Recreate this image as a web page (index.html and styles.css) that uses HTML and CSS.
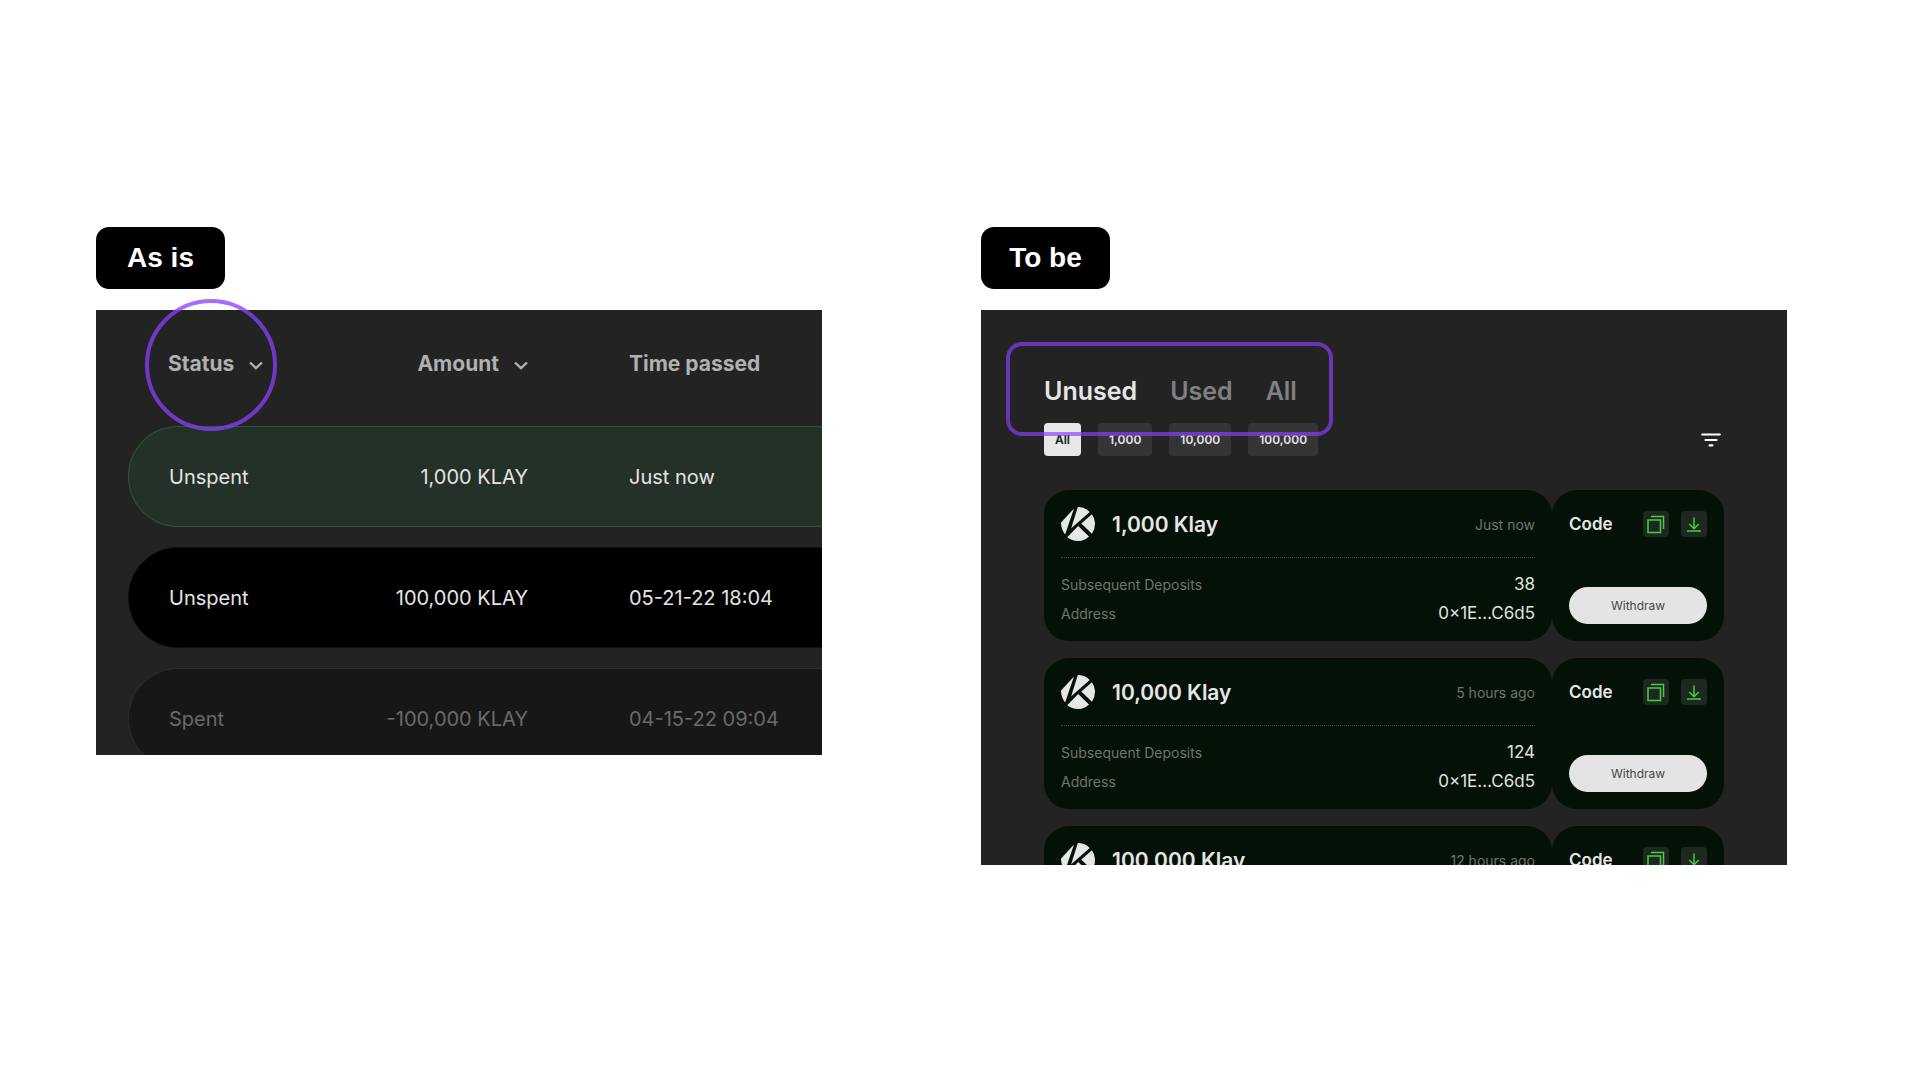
FILE: index.html
```html
<!DOCTYPE html>
<html lang="en">
  <head>
    <meta charset="utf-8">
    <title>As is / To be</title>
    <link rel="stylesheet" href="styles.css">
  </head>
  <body>
    <!-- Shared icons -->
    <svg class="sprite" aria-hidden="true">
      <symbol id="icon-chevron" viewBox="0 0 14 9">
        <path d="M1 1.5 7 7.2 13 1.5" fill="none" stroke="currentColor" stroke-width="2.4"/>
      </symbol>
      <symbol id="icon-filter" viewBox="0 0 20 14">
        <path d="M1.2 1.5H18.8M4.5 7H15.5M8.6 12.3H11.4" fill="none" stroke="currentColor" stroke-width="2.2" stroke-linecap="round"/>
      </symbol>
      <symbol id="icon-klay" viewBox="0 0 34 34">
        <path d="M13 1.4 0.1 15.6Q-.3 21.6 4.1 27.6Z"/>
        <path d="M16.8 0Q23.6-.2 28.7 4.9L10.2 21.3Z"/>
        <path d="M30.9 7.2Q34.2 11.5 34 17.2 33.9 22.6 30.9 26.8L20.3 16.6Z"/>
        <path d="M17.2 19 28 29.5Q23.2 34.1 17 34 10.8 34 6.2 30.3Z"/>
      </symbol>
      <symbol id="icon-copy" viewBox="0 0 26 26">
        <path d="M5 9H17.5V21.5H5ZM8 5.5H20.5V18" fill="none" stroke="currentColor" stroke-width="1.5"/>
      </symbol>
      <symbol id="icon-download" viewBox="0 0 26 26">
        <path d="M13 6.5V17.5M8.3 13 13 17.7 17.7 13M6 20H20" fill="none" stroke="currentColor" stroke-width="1.5"/>
      </symbol>
    </svg>
    <main class="compare">
      <section class="side">
        <h2 class="tag">As is</h2>
        <div class="shot">
          <div class="panel panel-before">
            <table class="history">
              <colgroup>
                <col class="col-status">
                <col class="col-amount">
                <col>
              </colgroup>
              <thead>
                <tr>
                  <th class="status"><button class="sort">Status <svg class="chevron"><use href="#icon-chevron"/></svg></button></th>
                  <th class="amount"><button class="sort">Amount <svg class="chevron"><use href="#icon-chevron"/></svg></button></th>
                  <th class="time">Time passed</th>
                </tr>
              </thead>
              <tbody>
                <tr class="row-new">
                  <td class="status">Unspent</td>
                  <td class="amount">1,000 KLAY</td>
                  <td class="time">Just now</td>
                </tr>
                <tr class="row-unspent">
                  <td class="status">Unspent</td>
                  <td class="amount">100,000 KLAY</td>
                  <td class="time">05-21-22 18:04</td>
                </tr>
                <tr class="row-spent">
                  <td class="status">Spent</td>
                  <td class="amount">-100,000 KLAY</td>
                  <td class="time">04-15-22 09:04</td>
                </tr>
              </tbody>
            </table>
          </div>
          <div class="mark mark-circle"></div>
        </div>
      </section>

      <section class="side">
        <h2 class="tag">To be</h2>
        <div class="shot">
          <div class="panel panel-after">
            <nav class="tabs">
              <button class="tab active">Unused</button>
              <button class="tab">Used</button>
              <button class="tab">All</button>
            </nav>
            <div class="filters">
              <button class="chip active">All</button>
              <button class="chip">1,000</button>
              <button class="chip">10,000</button>
              <button class="chip">100,000</button>
              <button class="filter-btn" aria-label="Filter"><svg class="filter-icon"><use href="#icon-filter"/></svg></button>
            </div>
            <div class="notes">
              <article class="note">
                <div class="card note-info">
                  <div class="note-head">
                    <svg class="logo"><use href="#icon-klay"/></svg>
                    <h3 class="note-title">1,000 Klay</h3>
                    <span class="ago">Just now</span>
                  </div>
                  <dl class="details">
                    <div class="detail"><dt>Subsequent Deposits</dt><dd>38</dd></div>
                    <div class="detail"><dt>Address</dt><dd>0×1E...C6d5</dd></div>
                  </dl>
                </div>
                <div class="card note-code">
                  <div class="code-head">
                    <h4 class="code-title">Code</h4>
                    <button class="icon-btn" aria-label="Copy"><svg class="icon"><use href="#icon-copy"/></svg></button>
                    <button class="icon-btn" aria-label="Download"><svg class="icon"><use href="#icon-download"/></svg></button>
                  </div>
                  <button class="withdraw">Withdraw</button>
                </div>
              </article>
              <article class="note">
                <div class="card note-info">
                  <div class="note-head">
                    <svg class="logo"><use href="#icon-klay"/></svg>
                    <h3 class="note-title">10,000 Klay</h3>
                    <span class="ago">5 hours ago</span>
                  </div>
                  <dl class="details">
                    <div class="detail"><dt>Subsequent Deposits</dt><dd>124</dd></div>
                    <div class="detail"><dt>Address</dt><dd>0×1E...C6d5</dd></div>
                  </dl>
                </div>
                <div class="card note-code">
                  <div class="code-head">
                    <h4 class="code-title">Code</h4>
                    <button class="icon-btn" aria-label="Copy"><svg class="icon"><use href="#icon-copy"/></svg></button>
                    <button class="icon-btn" aria-label="Download"><svg class="icon"><use href="#icon-download"/></svg></button>
                  </div>
                  <button class="withdraw">Withdraw</button>
                </div>
              </article>
              <article class="note">
                <div class="card note-info">
                  <div class="note-head">
                    <svg class="logo"><use href="#icon-klay"/></svg>
                    <h3 class="note-title">100,000 Klay</h3>
                    <span class="ago">12 hours ago</span>
                  </div>
                </div>
                <div class="card note-code">
                  <div class="code-head">
                    <h4 class="code-title">Code</h4>
                    <button class="icon-btn" aria-label="Copy"><svg class="icon"><use href="#icon-copy"/></svg></button>
                    <button class="icon-btn" aria-label="Download"><svg class="icon"><use href="#icon-download"/></svg></button>
                  </div>
                </div>
              </article>
            </div>
          </div>
          <div class="mark mark-box"></div>
        </div>
      </section>
    </main>
  </body>
</html>
```

FILE: styles.css
```css
* {
  box-sizing: border-box;
}
body {
  margin: 0;
  background: #fff;
  font-family: Inter, "Liberation Sans", sans-serif;
}
h2, h3, h4, dl, dd {
  margin: 0;
}
button {
  padding: 0;
  border: 0;
  background: none;
  color: inherit;
  font: inherit;
  cursor: pointer;
}
svg {
  display: block;
}
.sprite {
  position: absolute;
  width: 0;
  height: 0;
}
.compare {
  display: grid;
  grid-template-columns: 726fr 806fr;
  column-gap: 159px;
  align-items: start;
  padding: 227px 133px 0 96px;
}
.tag {
  width: 129px;
  margin-bottom: 21px;
  border-radius: 13px;
  background: #000;
  color: #fff;
  font-family: "Liberation Sans", Arial, sans-serif;
  font-size: 28px;
  font-weight: 700;
  line-height: 62px;
  text-align: center;
}
.shot {
  position: relative;
}
.panel {
  overflow: hidden;
  background: #232323;
}

/* Old history table */
.panel-before {
  aspect-ratio: 726 / 445;
  padding-left: 32px;
}
.history {
  width: 100%;
  table-layout: fixed;
  border-collapse: separate;
  border-spacing: 0 20px;
  color: #e4e4e4;
  font-size: 20px;
}
.col-status,
.col-amount {
  width: 200px;
}
.history th {
  height: 76px;
  padding: 0 0 10px;
  color: #b0b0b0;
  font-size: 21px;
  font-weight: 700;
  text-align: left;
}
.history td {
  height: 101px;
  padding: 0;
  border: 1px solid transparent;
  border-width: 1px 0;
}
.history .status {
  padding-left: 40px;
}
.history .amount {
  text-align: right;
}
.history .time {
  padding-left: 101px;
}
.history td.status {
  border-left-width: 1px;
  border-radius: 50px 0 0 50px;
}
.sort {
  display: inline-flex;
  align-items: center;
  gap: 15px;
}
.chevron {
  width: 14px;
  height: 9px;
  margin-top: 4px;
}
.row-new td {
  border-color: #2c592f;
  background: #243128;
}
.row-unspent td {
  border-color: #111;
  background: #000;
}
.row-spent td {
  border-color: #2d2d2d;
  background: #171717;
  color: #6a6a6a;
}

/* New note list */
.panel-after {
  aspect-ratio: 806 / 555;
  padding: 66px 63px 0;
}
.tabs {
  display: flex;
  gap: 33px;
  color: #808080;
  font-size: 25px;
  font-weight: 600;
  line-height: 30px;
}
.tab.active {
  color: #e6e6e6;
}
.filters {
  display: flex;
  align-items: center;
  gap: 17px;
  margin: 17px 0 34px;
}
.chip {
  height: 33px;
  padding: 0 11px;
  border-radius: 4px;
  background: #353535;
  color: #e4e4e4;
  font-size: 12px;
  font-weight: 600;
}
.chip.active {
  background: #e6e8e7;
  color: #0b2310;
}
.filter-btn {
  margin-left: auto;
  padding: 0 3px;
  color: #fff;
}
.filter-icon {
  width: 20px;
  height: 14px;
}
.notes {
  display: flex;
  flex-direction: column;
  gap: 17px;
}
.note {
  display: flex;
}
.card {
  padding: 17px;
  border-radius: 25px;
  background: #041106;
}
.note-info {
  flex: 1;
  padding-bottom: 13px;
}
.note-code {
  display: flex;
  flex-direction: column;
  justify-content: space-between;
  width: 172px;
}
.note-head,
.code-head {
  display: flex;
  align-items: center;
  height: 34px;
}
.logo {
  width: 34px;
  height: 34px;
  margin-right: 17px;
  fill: #e6e8e7;
}
.note-title {
  color: #e6e6e6;
  font-size: 21px;
  font-weight: 600;
}
.ago {
  margin-left: auto;
  color: #6e766f;
  font-size: 14px;
}
.details {
  margin-top: 16px;
  padding-top: 12px;
  border-top: 1px dotted #39443b;
}
.detail {
  display: flex;
  justify-content: space-between;
  line-height: 29px;
}
.detail dt {
  color: #6e766f;
  font-size: 14px;
}
.detail dd {
  color: #e0e2e0;
  font-size: 17px;
}
.code-head {
  gap: 12px;
}
.code-title {
  margin-right: auto;
  color: #e6e6e6;
  font-size: 17px;
  font-weight: 600;
}
.icon-btn {
  border-radius: 4px;
  background: #1d2920;
  color: #4fc94a;
}
.icon {
  width: 26px;
  height: 26px;
}
.withdraw {
  height: 37px;
  border-radius: 19px;
  background: #e4e4e4;
  color: #444;
  font-size: 12px;
}

/* Highlights drawn over the screens */
.mark {
  position: absolute;
  border: 4px solid #8a3ffc;
  pointer-events: none;
}
.mark-circle {
  top: -11px;
  left: 49px;
  width: 132px;
  height: 132px;
  border-radius: 50%;
  opacity: 0.76;
}
.mark-box {
  top: 32px;
  left: 25px;
  width: 327px;
  height: 94px;
  border-radius: 16px;
  opacity: 0.67;
}
```
